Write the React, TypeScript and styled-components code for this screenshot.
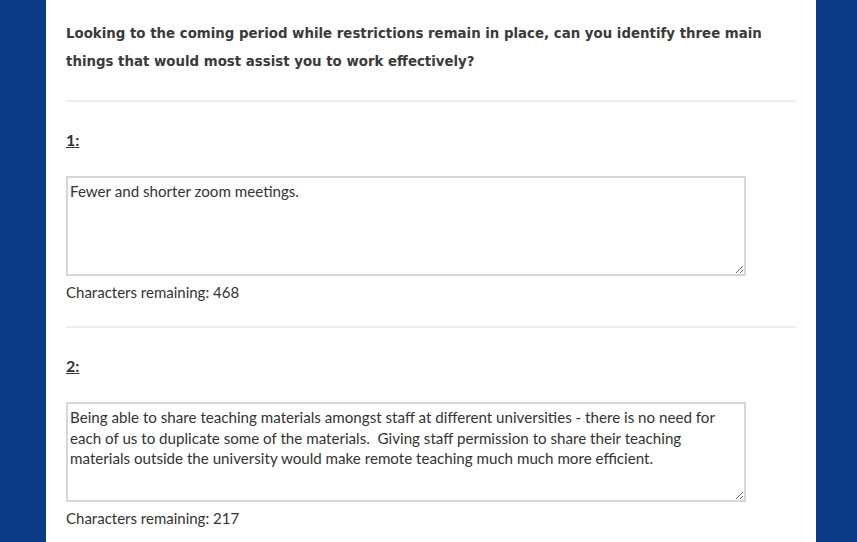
import styled, { createGlobalStyle } from 'styled-components';

const GlobalStyle = createGlobalStyle`
  html, body {
    margin: 0;
    padding: 0;
    background: #0b3a86;
  }
  body {
    font-family: 'Lato', 'Liberation Sans', sans-serif;
    color: #333;
  }
`;

const Page = styled.div`
  display: flex;
  justify-content: center;
  min-height: 542px;
  padding-left: 5px;
`;

const Panel = styled.main`
  width: 730px;
  background: #fff;
  padding: 20px 20px 0;
  margin-left: 41px;
  margin-right: 41px;
`;

const Question = styled.h2`
  margin: 0 0 24px;
  font-family: 'DejaVu Sans', sans-serif;
  font-size: 13.35px;
  font-weight: bold;
  line-height: 28px;
  color: #3a3a3a;
`;

const Divider = styled.hr`
  border: 0;
  border-top: 2px solid #eeeeee;
  margin: 0;
`;

const Item = styled.section`
  display: flex;
  flex-direction: column;
  align-items: flex-start;
`;

const Label = styled.label`
  font-size: 16px;
  font-weight: bold;
  text-decoration: underline;
  color: #333;
  margin-top: 28px;
  line-height: 20px;
`;

const Answer = styled.textarea`
  margin-top: 26px;
  width: 680px;
  height: 100px;
  box-sizing: border-box;
  border: 2px solid #d7d7db;
  padding: 3px 8px 3px 2px;
  font-family: 'Lato', 'Liberation Sans', sans-serif;
  font-size: 15.15px;
  line-height: 20.5px;
  color: #333;
  resize: vertical;
  outline: none;
`;

const Counter = styled.p`
  margin: 6px 0 24px;
  font-size: 15px;
  line-height: 20px;
  color: #333;
`;

const items = [
  {
    n: 1,
    text: 'Fewer and shorter zoom meetings.',
    left: 468,
  },
  {
    n: 2,
    text: 'Being able to share teaching materials amongst staff at different universities - there is no need for each of us to duplicate some of the materials.  Giving staff permission to share their teaching materials outside the university would make remote teaching much much more efficient.',
    left: 217,
  },
];

export default function App() {
  return (
    <>
      <GlobalStyle />
      <Page>
        <Panel>
          <Question>
            Looking to the coming period while restrictions remain in place, can you identify three main
            things that would most assist you to work effectively?
          </Question>
          {items.map((it) => (
            <div key={it.n}>
              <Divider />
              <Item>
                <Label htmlFor={`q${it.n}`}>{it.n}:</Label>
                <Answer id={`q${it.n}`} defaultValue={it.text} />
                <Counter>Characters remaining: {it.left}</Counter>
              </Item>
            </div>
          ))}
        </Panel>
      </Page>
    </>
  );
}
